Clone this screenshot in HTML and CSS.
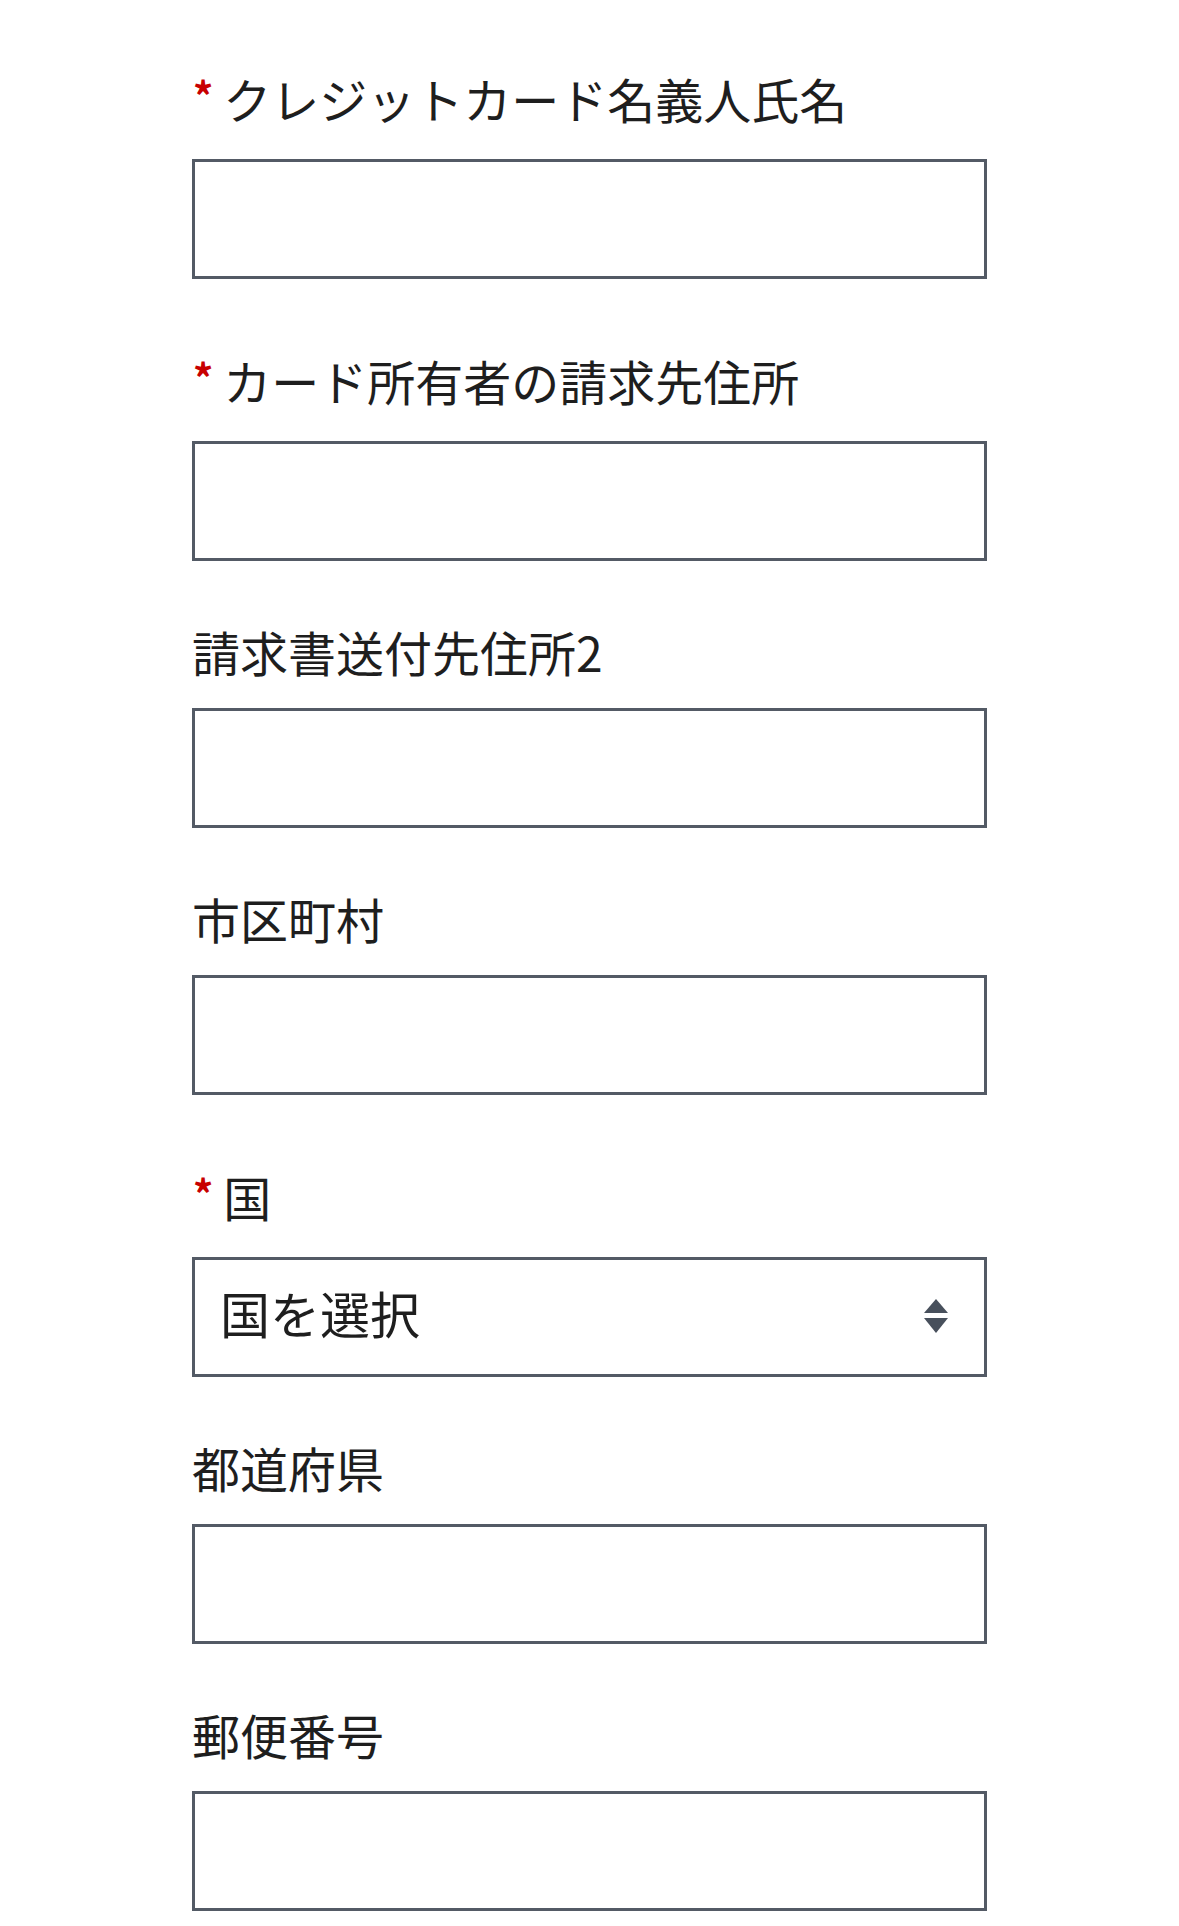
FILE: index.html
```html
<!DOCTYPE html>
<html lang="ja">
<head>
  <meta charset="UTF-8">
  <title>請求先情報</title>
  <link rel="stylesheet" href="styles.css">
</head>
<body>

<form class="form">
  <div class="field required">
    <label class="label" for="card-name"><abbr class="req" title="必須">*</abbr>クレジットカード名義人氏名</label>
    <input class="input" id="card-name" type="text">
  </div>

  <div class="field required">
    <label class="label" for="address1"><abbr class="req" title="必須">*</abbr>カード所有者の請求先住所</label>
    <input class="input" id="address1" type="text">
  </div>

  <div class="field">
    <label class="label" for="address2">請求書送付先住所2</label>
    <input class="input" id="address2" type="text">
  </div>

  <div class="field">
    <label class="label" for="city">市区町村</label>
    <input class="input" id="city" type="text">
  </div>

  <div class="field required">
    <label class="label" for="country"><abbr class="req" title="必須">*</abbr>国</label>
    <div class="select-wrap">
      <select class="input select" id="country">
        <option value="">国を選択</option>
        <option value="JP">日本</option>
        <option value="US">アメリカ合衆国</option>
      </select>
      <svg class="select-icon" width="24" height="34" viewBox="0 0 24 34">
        <path d="M12 0 L24 14 L0 14 Z" />
        <path d="M0 19 L24 19 L12 34 Z" />
      </svg>
    </div>
  </div>

  <div class="field">
    <label class="label" for="state">都道府県</label>
    <input class="input" id="state" type="text">
  </div>

  <div class="field">
    <label class="label" for="zip">郵便番号</label>
    <input class="input" id="zip" type="text">
  </div>
</form>

</body>
</html>
```

FILE: styles.css
```css
body {
  margin: 0;
  background-color: #fff;
  font-family: "Noto Sans CJK JP", "Noto Sans", sans-serif;
  color: #1e1e1e;
}
.form {
  width: 795px;
  margin: 0 auto;
  padding-top: 51px;
}
.field {
  margin-bottom: 54px;
}
.label {
  display: block;
  font-size: 48px;
  line-height: 72px;
  margin-bottom: 21px;
}
.field.required .label {
  padding-top: 11px;
  margin-bottom: 25px;
}
.req {
  color: #c80000;
  text-decoration: none;
  border: 0;
  font-size: 40px;
  font-weight: bold;
  margin-right: 10px;
  margin-left: 1px;
  vertical-align: 7px;
  line-height: 0;
}
.input {
  display: block;
  box-sizing: border-box;
  width: 100%;
  height: 120px;
  margin: 0;
  padding: 0 26px;
  border: 3px solid #535a65;
  border-radius: 0;
  background-color: #fff;
  font-family: inherit;
  font-size: 48px;
  color: #1e1e1e;
  outline: none;
}
.select-wrap {
  position: relative;
}
.select {
  -webkit-appearance: none;
  appearance: none;
  padding-left: 25px;
  padding-bottom: 10px;
  font-size: 50px;
  cursor: pointer;
}
.select-icon {
  position: absolute;
  right: 39px;
  top: 42px;
  fill: #48505c;
  pointer-events: none;
}
```
